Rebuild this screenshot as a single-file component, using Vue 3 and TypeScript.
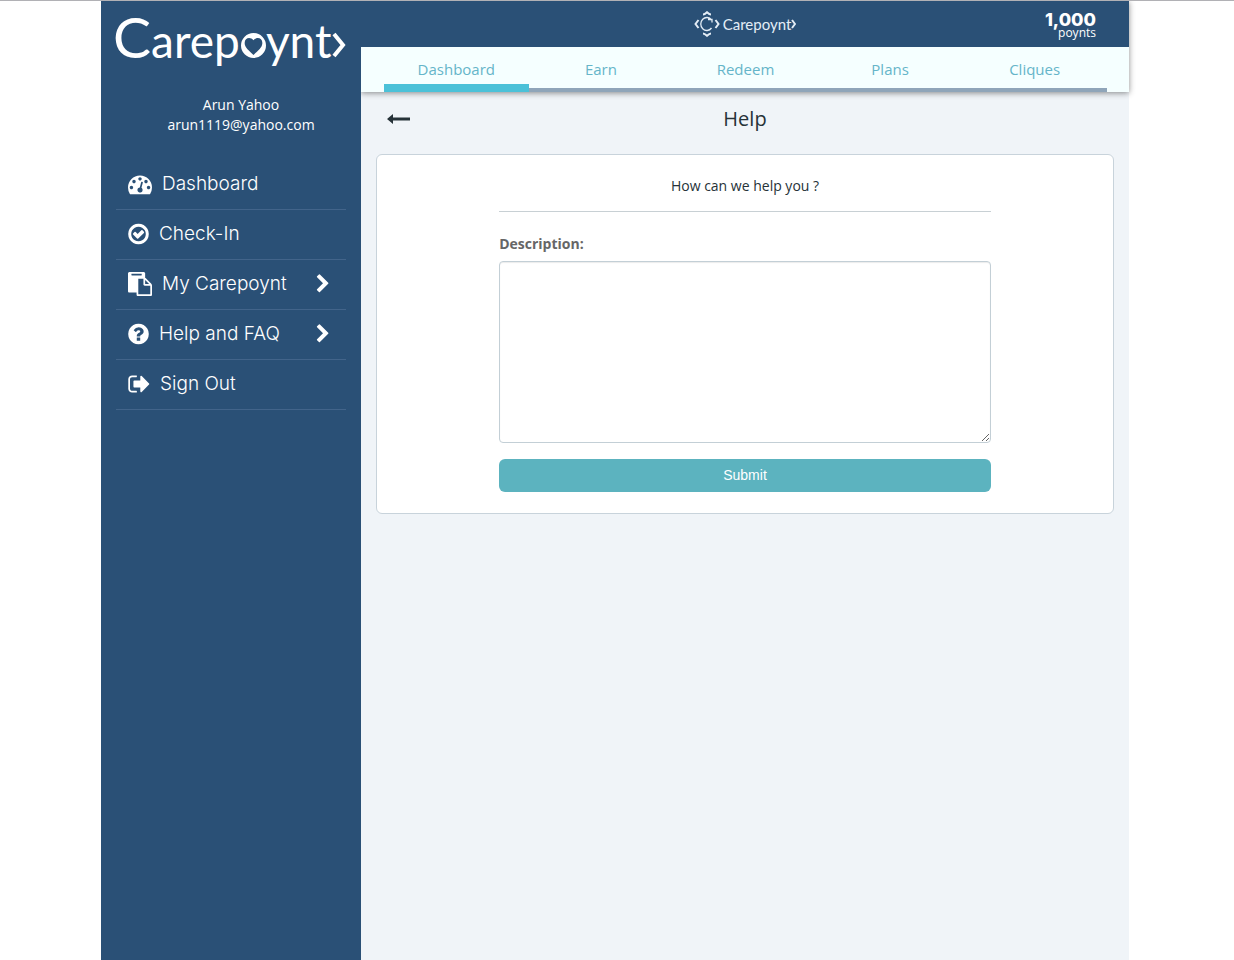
<script setup lang="ts">
import { ref } from 'vue'

interface MenuItem {
  label: string
  viewBox: string
  width: number
  path: string
  expandable: boolean
}

const ring =
  'm384 192q0 209-103 385.5t-279.5 279.5-385.5 103-385.5-103-279.5-279.5-103-385.5 103-385.5 279.5-279.5 385.5-103 385.5 103 279.5 279.5 103 385.5z'

const menu: MenuItem[] = [
  {
    label: 'Dashboard',
    viewBox: '0 0 1792 1792',
    width: 24,
    expandable: false,
    path: 'M384 1152q0-53-37.5-90.5t-90.5-37.5-90.5 37.5-37.5 90.5 37.5 90.5 90.5 37.5 90.5-37.5 37.5-90.5zm192-448q0-53-37.5-90.5t-90.5-37.5-90.5 37.5-37.5 90.5 37.5 90.5 90.5 37.5 90.5-37.5 37.5-90.5zm428 481l101-382q6-26-7.5-48.5t-38.5-29.5-48 6.5-30 39.5l-101 382q-60 5-107 43.5t-63 98.5q-20 77 20 146t117 89 146-20 89-117q16-60-6-117t-72-91zm660-33q0-53-37.5-90.5t-90.5-37.5-90.5 37.5-37.5 90.5 37.5 90.5 90.5 37.5 90.5-37.5 37.5-90.5zm-640-640q0-53-37.5-90.5t-90.5-37.5-90.5 37.5-37.5 90.5 37.5 90.5 90.5 37.5 90.5-37.5 37.5-90.5zm448 192q0-53-37.5-90.5t-90.5-37.5-90.5 37.5-37.5 90.5 37.5 90.5 90.5 37.5 90.5-37.5 37.5-90.5zm320 448q0 261-141 483-19 29-54 29h-1402q-35 0-54-29-141-221-141-483 0-182 71-348t191-286 286-191 348-71 348 71 286 191 191 286 71 348z',
  },
  {
    label: 'Check-In',
    viewBox: '128 0 1536 1792',
    width: 21,
    expandable: false,
    path: 'M1299 813l-422 422q-19 19-45 19t-45-19l-294-294q-19-19-19-45t19-45l102-102q19-19 45-19t45 19l147 147 275-275q19-19 45-19t45 19l102 102q19 19 19 45t-19 45zm141 83q0-148-73-273t-198-198-273-73-273 73-198 198-73 273 73 273 198 198 273 73 273-73 198-198 73-273zm224 0q0 209-103 385.5t-279.5 279.5-385.5 103-385.5-103-279.5-279.5-103-385.5 103-385.5 279.5-279.5 385.5-103 385.5 103 279.5 279.5 103 385.5z',
  },
  {
    label: 'My Carepoynt',
    viewBox: '0 0 1792 1792',
    width: 24,
    expandable: true,
    path: 'M768 1664h896v-640h-416q-40 0-68-28t-28-68v-416h-384v1152zm256-1440v-64q0-13-9.5-22.5t-22.5-9.5h-704q-13 0-22.5 9.5t-9.5 22.5v64q0 13 9.5 22.5t22.5 9.5h704q13 0 22.5-9.5t9.5-22.5zm256 672h299l-299-299v299zm512 128v672q0 40-28 68t-68 28h-960q-40 0-68-28t-28-68v-160h-544q-40 0-68-28t-28-68v-1344q0-40 28-68t68-28h1088q40 0 68 28t28 68v328q21 13 36 28l408 408q28 28 48 76t20 88z',
  },
  {
    label: 'Help and FAQ',
    viewBox: '128 0 1536 1792',
    width: 21,
    expandable: true,
    path:
      'M1024 1376v-192q0-14-9-23t-23-9h-192q-14 0-23 9t-9 23v192q0 14 9 23t23 9h192q14 0 23-9t9-23zm256-672q0-88-55.5-163t-138.5-116-170-41q-243 0-371 213-15 24 8 42l132 100q7 6 19 6 16 0 25-12 53-68 86-92 34-24 86-24 48 0 85.5 26t37.5 59q0 38-20 61t-68 45q-63 28-115.5 86.5t-52.5 125.5v36q0 14 9 23t23 9h192q14 0 23-9t9-23q0-19 21.5-49.5t54.5-49.5q32-18 49-28.5t46-35 44.5-48 28-60.5 12.5-81z' +
      ring,
  },
  {
    label: 'Sign Out',
    viewBox: '64 0 1600 1792',
    width: 22,
    expandable: false,
    path: 'M704 1440q0 4 1 20t.5 26.5-3 23.5-10 19.5-20.5 6.5h-320q-119 0-203.5-84.5t-84.5-203.5v-704q0-119 84.5-203.5t203.5-84.5h320q13 0 22.5 9.5t9.5 22.5q0 4 1 20t.5 26.5-3 23.5-10 19.5-20.5 6.5h-320q-66 0-113 47t-47 113v704q0 66 47 113t113 47h312l11.5 1 11.5 3 8 5.5 7 9 2 13.5zm928-544q0 26-19 45l-544 544q-19 19-45 19t-45-19-19-45v-288h-448q-26 0-45-19t-19-45v-384q0-26 19-45t45-19h448v-288q0-26 19-45t45-19 45 19l544 544q19 19 19 45z',
  },
]

const tabs = ['Dashboard', 'Earn', 'Redeem', 'Plans', 'Cliques']
const activeTab = ref('Dashboard')
const description = ref('')
</script>

<template>
  <div class="page">
    <aside class="sidebar">
      <a class="logo" href="#">
        <span class="logo-cap">C</span><span class="logo-rest">arep<span class="logo-o">o<svg class="heart" viewBox="0 0 24 24" aria-hidden="true"><path fill-rule="evenodd" d="M12 0a12 12 0 1 0 0 24a12 12 0 0 0 0-24zM12 21C8 17 3.500 14 3.500 9.500C3.500 4.500 9 3 12 7C15 3 20.500 4.500 20.500 9.500C20.500 14 16 17 12 21z" /></svg></span>ynt</span>
        <svg class="logo-chevron" viewBox="0 0 15 26" aria-hidden="true"><path d="M3 2L12 13L3 24" /></svg>
      </a>
      <div class="user">
        <div>Arun Yahoo</div>
        <div>arun1119@yahoo.com</div>
      </div>
      <nav class="menu">
        <a v-for="item in menu" :key="item.label" class="menu-item" href="#">
          <svg class="menu-icon" :viewBox="item.viewBox" :width="item.width" height="24" aria-hidden="true">
            <path :d="item.path" />
          </svg>
          <span class="menu-label">{{ item.label }}</span>
          <svg v-if="item.expandable" class="menu-chevron" viewBox="0 0 1792 1792" aria-hidden="true">
            <path d="M1363 877l-742 742q-19 19-45 19t-45-19l-166-166q-19-19-19-45t19-45l531-531-531-531q-19-19-19-45t19-45l166-166q19-19 45-19t45 19l742 742q19 19 19 45t-19 45z" />
          </svg>
        </a>
      </nav>
    </aside>

    <div class="main">
      <header class="header">
        <div class="brand-bar">
          <a class="brand" href="#">
            <svg class="emblem" viewBox="0 0 26 26" aria-hidden="true">
              <path d="M4.500 9L1.500 13L4.500 17M21.500 9L24.500 13L21.500 17M9 3.500Q10.500 3.500 13 1.200Q15.500 3.500 17 3.500M9 22.500Q10.500 22.500 13 24.800Q15.500 22.500 17 22.500" />
              <path class="thin" d="M17.500 9A6 6.500 0 1 0 17.500 17M14 8.500h4v3" />
            </svg>
            <span class="brand-name">Carepoynt</span>
            <svg class="brand-chevron" viewBox="0 0 5 10" aria-hidden="true"><path d="M1 1L4 5L1 9" /></svg>
          </a>
          <div class="points">
            <strong>1,000</strong>
            <span>poynts</span>
          </div>
        </div>
        <nav class="tabs">
          <a
            v-for="tab in tabs"
            :key="tab"
            href="#"
            class="tab"
            :class="{ active: tab === activeTab }"
            @click.prevent="activeTab = tab"
          >{{ tab }}</a>
        </nav>
      </header>

      <div class="title-row">
        <button class="back" type="button" aria-label="Back">
          <svg viewBox="0 0 24 12" aria-hidden="true"><path d="M0 6L6 1V4.500H23V7.500H6V11z" /></svg>
        </button>
        <h1>Help</h1>
      </div>

      <section class="card">
        <form class="form" @submit.prevent>
          <p class="question">How can we help you ?</p>
          <label for="description">Description:</label>
          <textarea id="description" v-model="description"></textarea>
          <button class="submit" type="submit">Submit</button>
        </form>
      </section>
    </div>
  </div>
</template>

<style>
body {
  margin: 0;
  background: #fff;
}
</style>

<style scoped>
* {
  box-sizing: border-box;
}
a {
  color: inherit;
  text-decoration: none;
}
.page {
  display: flex;
  min-height: 100vh;
  padding: 0 105px 0 101px;
  border-top: 1px solid #b1b1b5;
  font-family: 'Open Sans', 'Noto Sans', sans-serif;
  font-size: 14px;
  line-height: 20px;
}
.sidebar {
  flex: none;
  width: 260px;
  padding: 0 15px;
  background: #2a5076;
  color: #fff;
}
.logo {
  display: flex;
  align-items: baseline;
  height: 94px;
  margin-left: -3px;
  font-family: Lato, sans-serif;
  line-height: 70px;
  white-space: nowrap;
}
.logo-cap {
  font-size: 57px;
}
.logo-rest {
  font-size: 46px;
}
.logo-o {
  position: relative;
  color: transparent;
}
.heart {
  position: absolute;
  left: 1px;
  bottom: 10px;
  width: 25px;
  height: 25px;
  fill: #fff;
}
.logo-chevron {
  flex: none;
  width: 15px;
  height: 26px;
  margin-left: auto;
}
.logo-chevron path {
  fill: none;
  stroke: #fff;
  stroke-width: 4;
}
.user {
  padding-left: 20px;
  text-align: center;
}
.menu {
  margin-top: 25px;
}
.menu-item {
  display: flex;
  align-items: center;
  height: 50px;
  padding: 0 10px 2px 12px;
  border-bottom: 1px solid #42648a;
  font-family: Inter, 'Open Sans', sans-serif;
  font-size: 19px;
  font-weight: 300;
}
.menu-icon {
  flex: none;
  fill: #fff;
}
.menu-label {
  flex: 1;
  margin-left: 10px;
}
.menu-chevron {
  width: 20px;
  height: 20px;
  margin-right: 3px;
  fill: #fff;
}
.main {
  flex: 1;
  min-width: 0;
  background: #f0f4f8;
}
.header {
  background: #f5ffff;
  box-shadow: 0 1px 6px rgba(0, 0, 0, 0.45);
  clip-path: inset(0 -10px -10px 0);
}
.brand-bar {
  display: grid;
  grid-template-columns: 1fr auto 1fr;
  align-items: center;
  height: 46px;
  padding: 0 33px;
  background: #2a5076;
  color: #fff;
}
.brand {
  grid-column: 2;
  display: flex;
  align-items: center;
  color: #e4edf6;
  font-family: Lato, sans-serif;
  font-size: 15px;
}
.emblem {
  width: 26px;
  height: 26px;
  margin-right: 3px;
}
.emblem path,
.brand-chevron path {
  fill: none;
  stroke: #e4edf6;
  stroke-width: 2;
}
.emblem .thin {
  stroke-width: 1.3;
}
.brand-chevron {
  width: 5px;
  height: 10px;
}
.points {
  display: flex;
  flex-direction: column;
  align-items: flex-end;
  padding-top: 3px;
}
.points strong {
  font-family: Inter, sans-serif;
  font-size: 18px;
  font-weight: 800;
  line-height: 15px;
}
.points span {
  font-size: 12px;
  line-height: 12px;
}
.tabs {
  display: flex;
  height: 45px;
  padding: 0 22px 0 23px;
}
.tab {
  flex: 1;
  border-bottom: 4px solid #8fa5b9;
  color: #65b5c9;
  font-size: 15px;
  line-height: 45px;
  text-align: center;
}
.tab.active {
  border-bottom: 8px solid #4bc1d8;
}
.title-row {
  display: grid;
  grid-template-columns: 1fr auto 1fr;
  align-items: center;
  height: 62px;
  padding: 0 26px 8px;
  color: #263238;
}
.back {
  width: 24px;
  height: 12px;
  padding: 0;
  border: 0;
  background: none;
  cursor: pointer;
}
.back svg {
  display: block;
  width: 24px;
  height: 12px;
  fill: #263238;
}
h1 {
  margin: 0;
  font-size: 20px;
  font-weight: 400;
  line-height: 28px;
}
.card {
  margin: 0 15px;
  padding: 21px 0;
  border: 1px solid #c8d3db;
  border-radius: 6px;
  background: #fff;
}
.form {
  display: flex;
  flex-direction: column;
  width: 66.8%;
  margin: 0 auto;
}
.question {
  margin: 0 0 22px;
  padding-bottom: 15px;
  border-bottom: 1px solid #c8d0d4;
  color: #263238;
  text-align: center;
}
label {
  margin-bottom: 7px;
  color: #666;
  font-weight: 700;
}
textarea {
  height: 182px;
  margin: 0 0 16px;
  padding: 6px 12px;
  border: 1px solid #c3cfd6;
  border-radius: 4px;
  box-shadow: inset 0 1px 1px rgba(0, 0, 0, 0.08);
  font: inherit;
  resize: vertical;
}
.submit {
  height: 33px;
  padding: 0 0 2px;
  border: 0;
  border-radius: 6px;
  background: #5cb3bf;
  color: #fff;
  font-family: 'Liberation Sans', Arial, sans-serif;
  font-size: 14px;
  cursor: pointer;
}
</style>
